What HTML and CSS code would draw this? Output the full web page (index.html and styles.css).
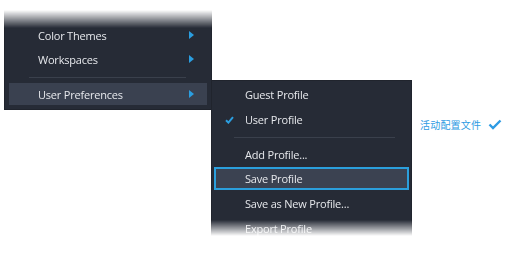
FILE: index.html
```html
<!DOCTYPE html>
<html>
<head>
<meta charset="utf-8">
<link rel="stylesheet" href="styles.css">
</head>
<body>
<div class="stage">
  <div class="menu menu-main">
    <div class="item"><span class="label">Color Themes</span><span class="arrow"></span></div>
    <div class="item"><span class="label">Workspaces</span><span class="arrow"></span></div>
    <div class="sep"></div>
    <div class="item active"><span class="label">User Preferences</span><span class="arrow"></span></div>
  </div>
  <div class="menu menu-sub">
    <div class="item"><span class="check"></span><span class="label">Guest Profile</span></div>
    <div class="item"><span class="check"><svg width="9" height="8" viewBox="0 0 9 8"><path d="M1 4.2 L3.4 6.6 L8 1.2" fill="none" stroke="#2b9ee0" stroke-width="2"/></svg></span><span class="label">User Profile</span></div>
    <div class="sep"></div>
    <div class="item"><span class="check"></span><span class="label">Add Profile...</span></div>
    <div class="item focus"><span class="check"></span><span class="label">Save Profile</span></div>
    <div class="item"><span class="check"></span><span class="label">Save as New Profile...</span></div>
    <div class="item"><span class="check"></span><span class="label">Export Profile</span></div>
  </div>
  <div class="note">活动配置文件<svg width="14" height="11" viewBox="0 0 14 11"><path d="M1.5 5.5 L5 9 L12.5 1.5" fill="none" stroke="#2e9be3" stroke-width="2.4"/></svg></div>
</div>
</body>
</html>
```
FILE: styles.css
```css
html, body { margin: 0; padding: 0; background: #ffffff; }
.stage { position: relative; width: 526px; height: 270px; overflow: hidden; font-family: "Open Sans", "Noto Sans", sans-serif; font-size: 11px; letter-spacing: -0.2px; }
.menu { position: absolute; background: #262b36; box-sizing: border-box; border: 1px solid #20242d; color: #e6e8ec; }
.menu-main { left: 4px; top: 10px; width: 208px; height: 100px; padding: 12px 4px 4px 4px;
  -webkit-mask-image: linear-gradient(to bottom, transparent 0px, #000 18px);
  mask-image: linear-gradient(to bottom, transparent 0px, #000 18px); }
.menu-sub { left: 211px; top: 80px; width: 201px; height: 160px; padding: 1px 2px;
  -webkit-mask-image: linear-gradient(to bottom, #000 140px, transparent 156px);
  mask-image: linear-gradient(to bottom, #000 140px, transparent 156px); }
.item { display: flex; align-items: center; height: 24px; }
.menu-main .item { padding-left: 29px; padding-right: 13px; }
.menu-main .item.active { height: 22px; background: #3a4150; }
.label { flex: 1; white-space: nowrap; }
.arrow { width: 0; height: 0; border-top: 4px solid transparent; border-bottom: 4px solid transparent; border-left: 5px solid #2b9ee0; }
.sep { height: 11px; display: flex; align-items: center; }
.sep::before { content: ""; flex: 1; height: 1px; background: #3a404c; }
.menu-main .sep { margin: 0 21px 0 20px; height: 12px; }
.menu-sub .sep { margin: 0 14px 0 20px; height: 10px; }
.menu-sub .item { height: 25px; }
.check { width: 31px; display: flex; justify-content: center; }
.menu-sub .item.focus { height: 23px; box-sizing: border-box; border: 2px solid #2b9fdc; background: #3b4251; }
.menu-sub .item.focus .check { width: 29px; }
.menu-sub .item.focus + .item { margin-top: 1px; }
.note { position: absolute; left: 420px; top: 117px; color: #2e9be3; font-family: "Noto Sans CJK SC", sans-serif; font-size: 10px; letter-spacing: 0.2px; display: flex; align-items: center; gap: 7px; }
```
